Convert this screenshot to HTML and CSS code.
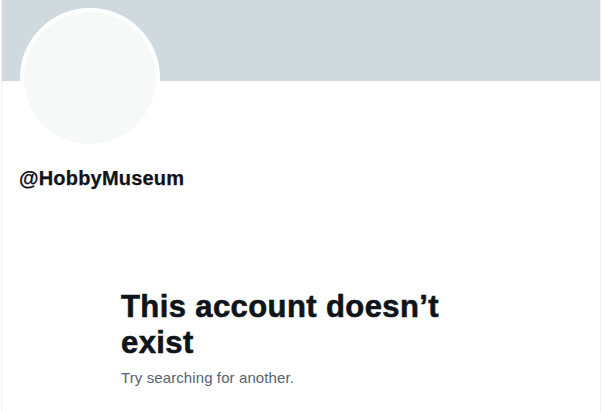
FILE: index.html
```html
<!DOCTYPE html>
<html lang="en">
<head>
<meta charset="utf-8">
<title>@HobbyMuseum</title>
<link rel="stylesheet" href="styles.css">
</head>
<body>
<main class="column">
  <div class="banner"></div>
  <div class="profile">
    <div class="avatar"><div class="avatar-inner"></div></div>
    <div class="handle">@HobbyMuseum</div>
  </div>
  <section class="empty">
    <h1 class="empty-title">This account doesn’t exist</h1>
    <p class="empty-sub">Try searching for another.</p>
  </section>
</main>
</body>
</html>
```

FILE: styles.css
```css
html, body {
  margin: 0;
  padding: 0;
  background: #ffffff;
}
body {
  font-family: "Liberation Sans", Arial, sans-serif;
  color: #0f1419;
}
.column {
  margin-left: 1px;
  width: 598px;
  min-height: 412px;
  border-left: 1px solid #eff3f4;
  border-right: 1px solid #eff3f4;
  display: flex;
  flex-direction: column;
}
.banner {
  height: 81px;
  background: #cfd9de;
}
.profile {
  display: flex;
  flex-direction: column;
  align-items: flex-start;
  padding-left: 17px;
}
.avatar {
  margin-top: -73px;
  margin-left: 1px;
  width: 140px;
  height: 140px;
  box-sizing: border-box;
  border: 4px solid #ffffff;
  border-radius: 50%;
  background: #ffffff;
}
.avatar-inner {
  width: 100%;
  height: 100%;
  border-radius: 50%;
  background: #f7f9f9;
}
.handle {
  margin-top: 18px;
  font-size: 20px;
  line-height: 24px;
  font-weight: 700;
  letter-spacing: 0.2px;
  -webkit-text-stroke: 0.25px #0f1419;
  color: #0f1419;
}
.empty {
  margin-top: 99px;
  padding-left: 119px;
  width: 340px;
}
.empty-title {
  margin: 0;
  font-size: 31px;
  line-height: 36px;
  font-weight: 800;
  letter-spacing: 0.4px;
  -webkit-text-stroke: 0.6px #0f1419;
  color: #0f1419;
}
.empty-sub {
  margin: 7px 0 0;
  font-size: 15px;
  line-height: 20px;
  letter-spacing: 0.1px;
  color: #536471;
}
```
